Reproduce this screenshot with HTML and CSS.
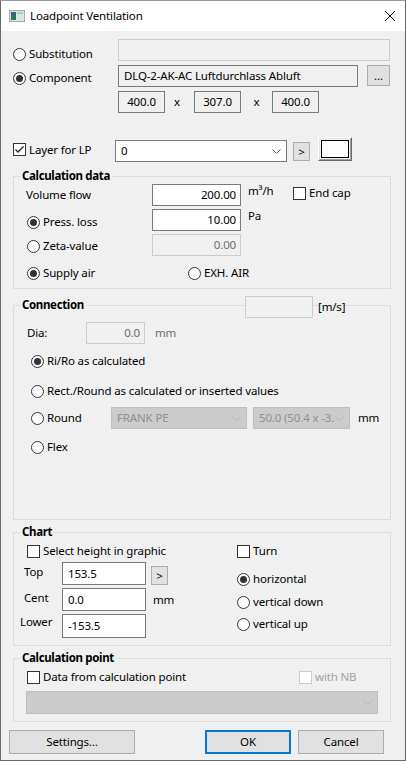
FILE: index.html
```html
<!DOCTYPE html>
<html>
<head>
<meta charset="utf-8">
<title>Loadpoint Ventilation</title>
<link rel="stylesheet" href="styles.css">
</head>
<body>
<div class="window">
  <div class="titlebar">
    <svg class="app-icon" width="16" height="12" viewBox="0 0 16 12">
      <rect x="0.5" y="0.5" width="15" height="11" fill="#e4e4e4" stroke="#a8a8a8"/>
      <rect x="2" y="2" width="5" height="8" fill="#2f6e6a"/>
      <rect x="2" y="2" width="5" height="3" fill="#3c5f8a"/>
      <rect x="8" y="2" width="6" height="8" fill="#cfe9dc"/>
      <rect x="8" y="2" width="6" height="2" fill="#9fd0bd"/>
    </svg>
    <span class="title">Loadpoint Ventilation</span>
    <svg class="close" width="12" height="12" viewBox="0 0 12 12">
      <path d="M1 1 L11 11 M11 1 L1 11" stroke="#000" stroke-width="1" fill="none"/>
    </svg>
  </div>

  <div class="client">
    <div class="row row-subst">
      <label class="opt w105 subst-opt"><span class="radio"></span>Substitution</label>
      <div class="tb disabled w272"></div>
    </div>
    <div class="row row-comp">
      <label class="opt w105 comp-opt"><span class="radio checked"></span>Component</label>
      <div class="tb readonly w240 pl5">DLQ-2-AK-AC Luftdurchlass Abluft</div>
      <div class="btn btn-dots">...</div>
    </div>
    <div class="row row-dims">
      <div class="tb readonly dim">400.0</div>
      <span class="dimx dimx1">x</span>
      <div class="tb readonly dim">307.0</div>
      <span class="dimx dimx2">x</span>
      <div class="tb readonly dim">400.0</div>
    </div>

    <div class="row row-layer">
      <label class="opt layer-opt"><span class="check checked"><svg width="11" height="11" viewBox="0 0 11 11"><path d="M1.5 5.5 L4 8 L9.5 2.5" stroke="#222" stroke-width="1.3" fill="none"/></svg></span>Layer for LP</label>
      <div class="combo layer-combo"><span>0</span><svg class="chev" width="9" height="5" viewBox="0 0 9 5"><path d="M0.5 0.5 L4.5 4.5 L8.5 0.5" stroke="#606060" fill="none"/></svg></div>
      <div class="btn btn-arrow layer-arrow">&gt;</div>
      <div class="colorbtn"><div class="colorbtn-in"><div class="swatch"></div></div></div>
    </div>

    <div class="group group-calc">
      <div class="legend">Calculation data</div>
      <div class="row row-vol">
        <span class="lbl vol-lbl">Volume flow</span>
        <div class="tb num w89">200.00</div>
        <span class="unit unit-top">m³/h</span>
        <label class="opt endcap"><span class="check"></span>End cap</label>
      </div>
      <div class="row row-press">
        <label class="opt press-opt"><span class="radio checked"></span>Press. loss</label>
        <div class="tb num w89">10.00</div>
        <span class="unit unit-top">Pa</span>
      </div>
      <div class="row row-zeta">
        <label class="opt zeta-opt"><span class="radio"></span>Zeta-value</label>
        <div class="tb disabled num w89">0.00</div>
      </div>
      <div class="row row-supply">
        <label class="opt supply-opt"><span class="radio checked"></span>Supply air</label>
        <label class="opt"><span class="radio"></span>EXH. AIR</label>
      </div>
    </div>

    <div class="group group-conn">
      <div class="conn-head">
        <div class="legend legend-inline">Connection</div>
        <div class="tb disabled velbox"></div>
        <span class="velunit">[m/s]</span>
      </div>
      <div class="row row-dia">
        <span class="lbl dia-lbl">Dia:</span>
        <div class="tb disabled num diabox">0.0</div>
        <span class="unit gray dia-mm">mm</span>
      </div>
      <div class="row row-ri">
        <label class="opt"><span class="radio checked"></span>Ri/Ro as calculated</label>
      </div>
      <div class="row row-rect">
        <label class="opt"><span class="radio"></span>Rect./Round as calculated or inserted values</label>
      </div>
      <div class="row row-round">
        <label class="opt round-opt"><span class="radio"></span>Round</label>
        <div class="combo disabled combo1"><span>FRANK PE</span><svg class="chev" width="9" height="5" viewBox="0 0 9 5"><path d="M0.5 0.5 L4.5 4.5 L8.5 0.5" stroke="#b4b4b4" fill="none"/></svg></div>
        <div class="combo disabled combo2"><span>50.0 (50.4 x -3.</span><svg class="chev" width="9" height="5" viewBox="0 0 9 5"><path d="M0.5 0.5 L4.5 4.5 L8.5 0.5" stroke="#b4b4b4" fill="none"/></svg></div>
        <span class="unit round-mm">mm</span>
      </div>
      <div class="row row-flex">
        <label class="opt"><span class="radio"></span>Flex</label>
      </div>
    </div>

    <div class="group group-chart">
      <div class="legend">Chart</div>
      <div class="row row-select">
        <label class="opt select-opt"><span class="check"></span>Select height in graphic</label>
        <label class="opt"><span class="check"></span>Turn</label>
      </div>
      <div class="chart-body">
        <div class="chart-left">
          <div class="hrow hrow-top">
            <span class="hlbl hlbl-top">Top</span>
            <div class="tb hbox">153.5</div>
            <div class="btn btn-arrow chart-arrow">&gt;</div>
          </div>
          <div class="hrow hrow-cent">
            <span class="hlbl hlbl-cent">Cent</span>
            <div class="tb hbox">0.0</div>
            <span class="unit cent-mm">mm</span>
          </div>
          <div class="hrow hrow-lower">
            <span class="hlbl hlbl-lower">Lower</span>
            <div class="tb hbox">-153.5</div>
          </div>
        </div>
        <div class="chart-right">
          <label class="opt orient"><span class="radio checked"></span>horizontal</label>
          <label class="opt orient orient-down"><span class="radio"></span>vertical down</label>
          <label class="opt orient orient-up"><span class="radio"></span>vertical up</label>
        </div>
      </div>
    </div>

    <div class="group group-point">
      <div class="legend">Calculation point</div>
      <div class="row row-data">
        <label class="opt data-opt"><span class="check"></span>Data from calculation point</label>
        <label class="opt nb-opt"><span class="check disabled"></span>with NB</label>
      </div>
      <div class="combo disabled combo-point"><span></span><svg class="chev" width="9" height="5" viewBox="0 0 9 5"><path d="M0.5 0.5 L4.5 4.5 L8.5 0.5" stroke="#b4b4b4" fill="none"/></svg></div>
    </div>

    <div class="row row-buttons">
      <div class="btn btn-settings">Settings...</div>
      <div class="btn btn-ok">OK</div>
      <div class="btn btn-cancel">Cancel</div>
    </div>
  </div>
</div>
</body>
</html>
```
FILE: styles.css
```css
* { box-sizing: border-box; }
html, body { margin: 0; padding: 0; }
body {
  width: 406px;
  height: 761px;
  font-family: "Noto Sans", "Open Sans", sans-serif;
  font-size: 11.5px;
  letter-spacing: -0.15px;
  line-height: 16px;
  color: #000;
  background: #f0f0f0;
  overflow: hidden;
}
.window {
  width: 406px;
  height: 761px;
  border: 1px solid #6a6a6a;
  border-top-color: #9a9a9a;
  background: #f0f0f0;
  display: flex;
  flex-direction: column;
}
.titlebar {
  flex: none;
  height: 30px;
  background: #fff;
  display: flex;
  align-items: center;
}
.app-icon { margin-left: 8px; flex: none; }
.title { margin-left: 5px; }
.close { margin-left: auto; margin-right: 9px; flex: none; }

.client {
  flex: 1;
  display: flex;
  flex-direction: column;
  align-items: flex-start;
}
.row { display: flex; align-items: center; flex: none; }
.opt { display: flex; align-items: center; white-space: nowrap; flex: none; }

.radio {
  width: 13px; height: 13px;
  border: 1px solid #333;
  border-radius: 50%;
  background: #fff;
  margin-right: 3px;
  flex: none;
  display: flex; align-items: center; justify-content: center;
}
.radio.checked::after {
  content: "";
  width: 7px; height: 7px;
  border-radius: 50%;
  background: #333;
}
.check {
  width: 13px; height: 13px;
  border: 1px solid #333;
  background: #fff;
  margin-right: 3px;
  flex: none;
  display: flex; align-items: center; justify-content: center;
}
.check.disabled { border-color: #cccccc; }
.check svg { display: block; }

.tb {
  height: 22px;
  border: 1px solid #7a7a7a;
  background: #fff;
  display: flex;
  align-items: center;
  white-space: nowrap;
  overflow: hidden;
  flex: none;
}
.tb.readonly { background: #f0f0f0; }
.tb.disabled { background: #f0f0f0; border-color: #cccccc; color: #6d6d6d; }
.tb.num { justify-content: flex-end; padding-right: 4px; }
.pl5 { padding-left: 5px; }
.w105 { width: 105px; }
.w272 { width: 272px; }
.w240 { width: 240px; }
.w89 { width: 89px; }

.btn {
  background: #e1e1e1;
  border: 1px solid #adadad;
  display: flex;
  align-items: center;
  justify-content: center;
  flex: none;
}

/* top area */
.row-subst { margin-top: 8px; margin-left: 12px; height: 22px; align-items: flex-start; }
.subst-opt { height: 16px; margin-top: 7px; }
.row-comp { margin-top: 4px; margin-left: 12px; height: 22px; align-items: flex-start; }
.comp-opt { height: 16px; margin-top: 5px; }
.btn-dots { width: 23px; height: 21px; margin-left: 9px; }
.row-dims { margin-top: 4px; margin-left: 117px; height: 22px; }
.dim { width: 47px; justify-content: center; }
.dimx { text-align: center; flex: none; }
.dimx1 { width: 29px; padding-right: 5px; }
.dimx2 { width: 31px; }

.row-layer { margin-top: 24px; margin-left: 12px; height: 25px; align-items: flex-start; }
.layer-opt { width: 102px; height: 25px; }
.combo {
  height: 22px;
  border: 1px solid #7a7a7a;
  background: #fff;
  display: flex;
  align-items: center;
  justify-content: space-between;
  padding: 0 5px;
  white-space: nowrap;
  overflow: hidden;
  flex: none;
}
.combo.disabled { background: #cccccc; border-color: #bfbfbf; color: #8f8f8f; }
.chev { display: block; flex: none; }
.layer-combo { width: 172px; margin-top: 3px; }
.btn-arrow { width: 17px; height: 19px; }
.layer-arrow { margin-left: 6px; margin-top: 5px; }
.colorbtn {
  width: 34px; height: 24px;
  margin-left: 8px;
  border: 1px solid;
  border-color: #ffffff #696969 #696969 #ffffff;
  background: #f0f0f0;
  flex: none;
}
.colorbtn-in {
  width: 100%; height: 100%;
  border: 1px solid;
  border-color: #e3e3e3 #a0a0a0 #a0a0a0 #e3e3e3;
  padding: 1px;
}
.swatch { width: 100%; height: 100%; border: 1px solid #000; background: #fff; }

/* groups */
.group {
  margin-left: 12px;
  width: 378px;
  border: 1px solid #dcdcdc;
  display: flex;
  flex-direction: column;
  align-items: flex-start;
  flex: none;
}
.legend {
  font-weight: bold;
  letter-spacing: -0.35px;
  background: #f0f0f0;
  padding: 0 2px;
  margin: -9px 0 -7px 6px;
  height: 16px;
  white-space: nowrap;
  flex: none;
}
.lbl { flex: none; white-space: nowrap; }
.unit { flex: none; white-space: nowrap; }
.gray { color: #6d6d6d; }

.group-calc { margin-top: 14px; height: 113px; }
.row-vol { margin-top: 7px; margin-left: 12px; height: 22px; align-items: flex-start; }
.vol-lbl { width: 126px; line-height: 22px; }
.unit-top { width: 52px; padding-left: 7px; margin-top: -1px; }
.endcap { height: 16px; margin-top: 1px; }
.row-press { margin-top: 3px; margin-left: 13px; height: 22px; align-items: flex-start; }
.press-opt { width: 125px; height: 22px; margin-top: 2px; }
.row-zeta { margin-top: 3px; margin-left: 13px; height: 22px; align-items: flex-start; }
.zeta-opt { width: 125px; height: 22px; margin-top: 1px; }
.row-supply { margin-top: 9px; margin-left: 13px; height: 16px; }
.supply-opt { width: 161px; }

.group-conn { margin-top: 16px; height: 215px; align-items: stretch; }
.conn-head { margin-top: -10px; height: 22px; display: flex; align-items: flex-start; flex: none; }
.legend-inline { margin: 1px 0 0 6px; }
.velbox { margin-left: auto; width: 68px; }
.velunit { width: 77px; padding-left: 5px; line-height: 22px; flex: none; }
.group-conn > .row { align-self: flex-start; }
.row-dia { margin-top: 4px; margin-left: 13px; height: 22px; }
.dia-lbl { width: 59px; }
.diabox { width: 59px; }
.dia-mm { margin-left: 10px; }
.row-ri { margin-top: 9px; margin-left: 17px; height: 16px; }
.row-rect { margin-top: 14px; margin-left: 17px; height: 16px; }
.row-round { margin-top: 8px; margin-left: 17px; height: 22px; }
.round-opt { width: 80px; }
.combo1 { width: 136px; }
.combo2 { width: 97px; margin-left: 6px; }
.round-mm { margin-left: 8px; }
.row-flex { margin-top: 10px; margin-left: 17px; height: 16px; }

.group-chart { margin-top: 12px; height: 114px; }
.row-select { margin-top: 10px; margin-left: 13px; height: 16px; }
.select-opt { width: 210px; }
.chart-body { display: flex; margin-top: 3px; flex: none; }
.chart-left { width: 223px; display: flex; flex-direction: column; flex: none; }
.hrow { display: flex; align-items: flex-start; flex: none; }
.hrow-top { height: 23px; }
.hrow-cent { height: 23px; margin-top: 3px; }
.hrow-lower { height: 24px; margin-top: 3px; }
.hlbl { width: 48px; flex: none; white-space: nowrap; }
.hlbl-top, .hlbl-cent { padding-left: 10px; margin-top: 2px; }
.hlbl-lower { padding-left: 6px; }
.hbox { width: 84px; height: 100%; padding-left: 5px; }
.chart-arrow { margin-left: 5px; margin-top: 4px; }
.cent-mm { margin-left: 7px; line-height: 23px; }
.chart-right { display: flex; flex-direction: column; margin-top: 9px; flex: none; }
.orient { height: 16px; }
.orient-down { margin-top: 7px; }
.orient-up { margin-top: 6px; }

.group-point { margin-top: 12px; height: 64px; }
.row-data { margin-top: 10px; margin-left: 13px; height: 16px; }
.data-opt { width: 272px; }
.nb-opt { color: #a0a0a0; }
.combo-point { margin-top: 6px; margin-left: 12px; width: 352px; height: 23px; }

.row-buttons { margin-top: 8px; margin-left: 8px; height: 24px; }
.row-buttons .btn { height: 24px; }
.btn-settings { width: 126px; }
.btn-ok { width: 86px; margin-left: 70px; border: 2px solid #0078d7; }
.btn-cancel { width: 86px; margin-left: 7px; }
```
